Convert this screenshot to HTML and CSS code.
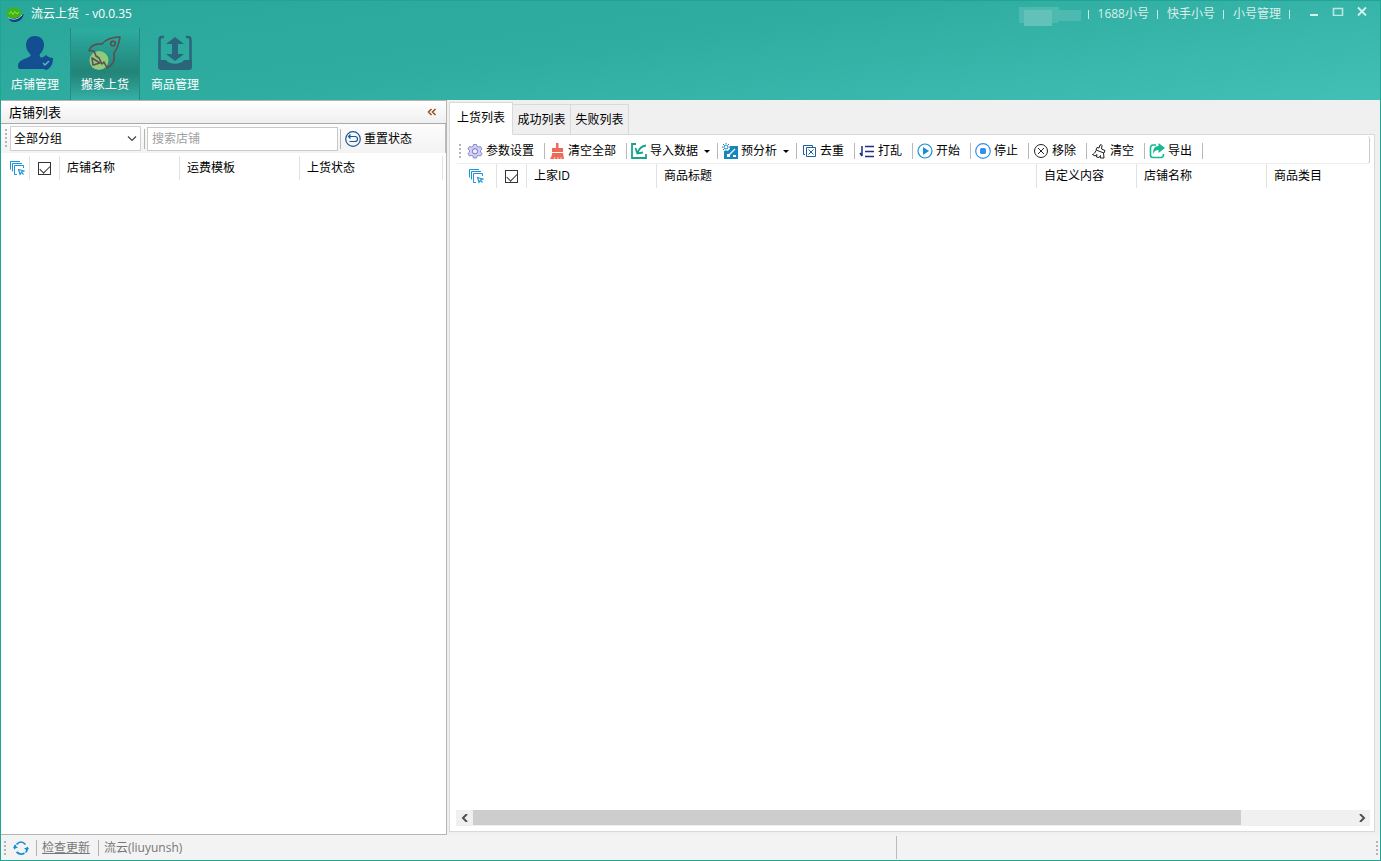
FILE: index.html
```html
<!DOCTYPE html>
<html lang="zh-CN">
<head>
<meta charset="utf-8">
<title>流云上货</title>
<link rel="stylesheet" href="styles.css">
</head>
<body>
<svg class="defs" aria-hidden="true">
  <symbol id="stack" viewBox="0 0 16 16"><g fill="none" stroke="#1c93d8"><path d="M1.500 9.500V1.500H11M3.500 11.500V3.500H13M8 14.500H5.500V5.500H14.500V8"/><path d="M9.500 9.500l1.500 5 1.500-2.500 2.500-1z M12.500 12.500l2 2" stroke-width="1.100"/></g></symbol>
</svg>
<div class="window">
  <header class="header">
    <div class="titlebar">
      <svg class="logo" viewBox="0 0 18 16"><ellipse cx="8" cy="7.500" rx="7.500" ry="6" fill="#3fb618"/><path d="M3 8l2-2.500 2 3 2-3 2 2.500 2-2" stroke="#9bdc50" fill="none"/><path d="M2 11c5 3 10 1 16-3-2 6-5 8-10 8-3 0-5-2-6-5z" fill="#123f80"/><path d="M2 11.500c5 3 10 2 14-2.500" stroke="#d5efe5" stroke-width=".8" fill="none"/></svg>
      <h1 class="title">流云上货&nbsp; - v0.0.35</h1>
      <nav class="links">
        <span class="mask"><svg viewBox="0 0 64 20"><path d="M1 1h40v3h22v11H40v2h-6v3H6v-3H1z" fill="#4db9af"/><path d="M6 4h28v16H6z" fill="#62c1b8"/></svg></span>
        <a href="#">1688小号</a><a href="#">快手小号</a><a href="#">小号管理</a>
      </nav>
      <div class="winbtns">
        <button aria-label="最小化"><svg viewBox="0 0 12 12"><path d="M2 11h8" stroke="#d8f1ee" stroke-width="2"/></svg></button>
        <button aria-label="最大化"><svg viewBox="0 0 12 12"><path d="M1.500 4.500h9v7h-9z" fill="none" stroke="#bde8e2" stroke-width="1.600"/></svg></button>
        <button aria-label="关闭"><svg viewBox="0 0 12 12"><path d="M2 3.500l8 8M10 3.500l-8 8" stroke="#d8f1ee" stroke-width="1.800"/></svg></button>
      </div>
    </div>
    <div class="modules">
      <button class="module"><svg viewBox="0 0 36 36"><path d="M18 1c6 0 9 4 9 9 0 4-2 7-4 9-1 2 0 3 2 4-2 5 0 9 3 11H3c-2 0-2-2-2-4 1-5 7-6 11-8 2-1 2-2 1-3-2-2-4-5-4-9 0-5 3-9 9-9z" fill="#134f90"/><path d="M29 20c2 2 4 3 7 3 0 6-2 10-7 12-5-2-7-6-7-12 3 0 5-1 7-3z" fill="#134f90"/><path d="M26 28l2 2 4-4" fill="none" stroke="#5bb4c0" stroke-width="1.500"/></svg>店铺管理</button>
      <button class="module active"><svg viewBox="0 0 36 36"><circle cx="12" cy="25.500" r="9.500" fill="#92ca7c"/><g fill="none" stroke="#5b4f50" stroke-width="1.600" stroke-linejoin="round"><path d="M2 15.500c2-5 7-7 13-6.500 5-6 11-7 18-7-1 7-3 12-6 16 1 8-1 12-7 15l-3-6-2 2-3-6-3-2-2-5z"/><path d="M5 23l1 7 7-2z"/><circle cx="26" cy="8.500" r="2.300"/></g></svg>搬家上货</button>
      <button class="module"><svg viewBox="0 0 36 36"><path d="M7 2H5Q2.500 2 2.500 5v26M29 2h2q2.500 0 2.500 3v26" fill="none" stroke="#2b657a" stroke-width="2.500"/><path d="M1 25h8c3 5 15 5 18 0h8v7q0 3-3 3H4q-3 0-3-3zM18 2l9 7h-6v10h6l-9 7-9-7h6V9H9z" fill="#2b657a"/></svg>商品管理</button>
    </div>
  </header>

  <main class="main">
    <section class="shops">
      <div class="caption"><h2>店铺列表</h2><button aria-label="折叠"><svg viewBox="0 0 10 8"><path d="M4.500 1l-3 3 3 3M8.500 1l-3 3 3 3" fill="none" stroke="#9a4a1c" stroke-width="1.500"/></svg></button></div>
      <div class="filters">
        <i class="grip"></i>
        <select class="group" aria-label="分组"><option>全部分组</option></select>
        <i class="bar"></i>
        <input class="search" type="text" placeholder="搜索店铺" aria-label="搜索店铺">
        <i class="bar"></i>
        <button class="reset"><svg viewBox="0 0 16 16"><g fill="none" stroke="#1d5795" stroke-width="1.200"><circle cx="8" cy="8" r="7.300"/><path d="M5.500 3.500l-2 2 2 2M3.500 5.500H10q2.500 0 2.500 2.500T10 10.500H4.500"/></g></svg>重置状态</button>
      </div>
      <table class="list shoplist">
        <colgroup><col class="c29"><col class="c30"><col class="c120"><col class="c120"><col class="c143"><col></colgroup>
        <thead><tr><th class="ico first"><svg><use href="#stack"/></svg></th><th class="ico"><input type="checkbox" checked aria-label="全选店铺"></th><th>店铺名称</th><th>运费模板</th><th>上货状态</th><th></th></tr></thead>
      </table>
    </section>

    <section class="goods">
      <div class="tabs" role="tablist"><button class="tab on" role="tab">上货列表</button><button class="tab" role="tab">成功列表</button><button class="tab" role="tab">失败列表</button></div>
      <div class="page">
        <div class="tools">
          <i class="grip"></i>
          <button class="tool w82"><svg viewBox="0 0 16 16"><path d="M6.500 1.500h3l.5 2 1.500.5 2-.5 1.500 2.500-1.500 1.500v1.500L15 10.500 13.500 13l-2-.5-1.500.5-.5 2h-3L6 13l-1.500-.5-2 .5L1 10.500 2.500 9V7.500L1 6l1.500-2.500 2 .5L6 3.500z" fill="#d0cff4" stroke="#7f7bc9" stroke-width=".9"/><circle cx="8" cy="8.300" r="2.600" fill="#f0effe" stroke="#7773c4"/></svg>参数设置</button>
          <button class="tool w82"><svg viewBox="0 0 16 16"><path d="M7 0h2.500v5H14v4H3V5h4zM3 10h11l1 6H1c1-2 2-3 2-6z" fill="#ee6a57"/><path d="M5 16l1-2M9 16v-2M12 16v-2" stroke="#fff" stroke-width=".7"/></svg>清空全部</button>
          <button class="tool w91"><svg viewBox="0 0 16 16"><g fill="none" stroke="#18a38f" stroke-width="1.800"><path d="M5 1H1v14h14v-4M15 2.500c-4 .5-7 3-8.500 7.500M4.500 5l1.800 5.500L12 9.500"/></g></svg>导入数据<i class="caret"></i></button>
          <button class="tool w79"><svg viewBox="0 0 16 16"><path d="M2 3h14v13H2z" fill="#1687be"/><circle cx="4" cy="4" r="4" fill="#fff"/><circle cx="4" cy="4" r="2" fill="none" stroke="#1687be"/><path d="M4 0v1M4 7v1M0 4h1M7 4h1M1 1l1 1M7 1L6 2M1 7l1-1" stroke="#1687be"/><path d="M13 6l-7 7" stroke="#fff" stroke-width="1.300"/><path d="M5 11h3v3H5zM11 12h3v2h-3z" fill="#fff"/></svg>预分析<i class="caret"></i></button>
          <button class="tool w58"><svg viewBox="0 0 16 16"><path d="M4 11.500H2.500v-9h9V4M5.500 4.500h9v9h-9zM7.500 6.500l5 5M12.500 6.500l-5 5" fill="none" stroke="#205f9e"/></svg>去重</button>
          <button class="tool w58"><svg viewBox="0 0 16 16"><path d="M3 3v10M1 10l2 3M6 3.500h9M6 8.500h9M6 13.500h9" fill="none" stroke="#1b2f86" stroke-width="1.500"/></svg>打乱</button>
          <button class="tool w58"><svg viewBox="0 0 16 16"><circle cx="8" cy="8" r="7" fill="none" stroke="#1590d5" stroke-width="1.200"/><path d="M6 4l6 4-6 4z" fill="#1590d5"/></svg>开始</button>
          <button class="tool w58"><svg viewBox="0 0 16 16"><circle cx="8" cy="8" r="7.300" fill="none" stroke="#3191ed" stroke-width="1.200"/><rect x="5" y="5" width="6" height="6" rx="1.500" fill="#3191ed"/></svg>停止</button>
          <button class="tool w58"><svg viewBox="0 0 16 16"><circle cx="8" cy="8" r="6.500" fill="none" stroke="#222"/><path d="M5 5l6 6M11 5l-6 6" stroke="#222"/></svg>移除</button>
          <button class="tool w58"><svg viewBox="0 0 16 16"><path d="M8 5l1-3q1.500-1 2 .5L10.500 6l3.500 1.500-1 2.500-8-3 1-2.500zM5 7.500C4 10 3 11 1.500 11.500L4 13l2-1.500-.5 2.500 2.500.500 1.500-2-.2 2.500H13l-.5-5" fill="none" stroke="#222"/></svg>清空</button>
          <button class="tool w58"><svg viewBox="0 0 16 16"><path d="M7 2H4Q1.500 2 1.500 5v7q0 2.500 2.500 2.500h8q2.500 0 2.500-3V11" fill="none" stroke="#15b994" stroke-width="1.600"/><path d="M9.500 0l6.500 5-6.500 5V7c-3 0-4 1-5.500 4 0-5 1.500-8 5.500-8z" fill="#15b994"/></svg>导出</button>
        </div>
        <table class="list goodslist">
          <colgroup><col class="c41"><col class="c30"><col class="c130"><col class="c380"><col class="c100"><col class="c130"><col></colgroup>
          <thead><tr><th class="ico"><svg><use href="#stack"/></svg></th><th class="ico"><input type="checkbox" checked aria-label="全选商品"></th><th>上家ID</th><th>商品标题</th><th>自定义内容</th><th>店铺名称</th><th>商品类目</th></tr></thead>
        </table>
        <div class="scroll">
          <button aria-label="向左"><svg viewBox="0 0 8 8"><path d="M6 0L2 4l4 4" fill="none" stroke="#505050" stroke-width="2"/></svg></button>
          <div class="track"><div class="thumb"></div></div>
          <button aria-label="向右"><svg viewBox="0 0 8 8"><path d="M2 0l4 4-4 4" fill="none" stroke="#505050" stroke-width="2"/></svg></button>
        </div>
      </div>
    </section>
  </main>

  <footer class="status">
    <div class="info">
      <i class="grip"></i>
      <svg class="sync" viewBox="0 0 16 16"><path d="M3.500 4.500q4.500-5 9 0M14 7q1 3-1.500 5.500M11.500 13q-4 2.500-8-1M2 9q-1-2 .5-4" fill="none" stroke="#168fd5" stroke-width="1.700"/><path d="M0 8l2-3 3 3zM11 8h5l-2 3z" fill="#168fd5"/></svg>
      <i class="bar"></i><a href="#">检查更新</a><i class="bar"></i><span>流云(liuyunsh)</span>
    </div>
    <i class="grip"></i>
  </footer>
</div>
</body>
</html>
```
FILE: styles.css
```css
* { box-sizing: border-box; }
body, h1, h2 { margin: 0; font-weight: 400; font-size: 12px; }
body, button, input, select { font-family: "Open Sans", "Noto Sans CJK SC", sans-serif; font-size: 12px; line-height: 16px; color: #000; }
button { border: 0; padding: 0; background: none; }
svg { display: block; flex: none; }
.defs { position: absolute; width: 0; height: 0; }

.window { height: 100vh; display: flex; flex-direction: column; border: 1px solid #20a594; border-top: 0; background: #f0f0f0; }

.header { height: 100px; flex: none; background: linear-gradient(172deg, #2aa79b, #2fada1 45%, #42c0b5); border-top: 1px solid #20a594; color: #fff; }
.titlebar { display: flex; height: 25px; padding-left: 5px; align-items: center; }
.logo { width: 18px; height: 16px; }
.title { margin-left: 7px; color: #fff; }
.links { display: flex; align-items: center; margin-left: auto; }
.links a { color: #ddeeea; text-decoration: none; padding: 0 9px; position: relative; }
.links a::after, .mask::after { content: ""; position: absolute; right: 0; top: 4px; width: 1px; height: 9px; background: #cfe9e5; }
.mask { width: 71px; padding-right: 7px; position: relative; height: 16px; }
.mask svg { width: 64px; height: 20px; }
.winbtns { display: flex; align-self: flex-start; margin: 3px 12px 0 18px; gap: 12px; }
.winbtns svg { width: 12px; height: 12px; }
.modules { display: flex; padding-top: 2px; margin-left: -1px; }
.module { width: 70px; height: 72px; padding-top: 6px; display: flex; flex-direction: column; align-items: center; gap: 5px; color: #fff; }
.module svg { width: 36px; height: 38px; }
.module.active { background: linear-gradient(#2cab9f 5%, #238479 60%, #26897e 68%, #35b1a6); border: solid #258b80; border-width: 0 1px; }

.main { flex: 1; display: flex; min-height: 0; gap: 2px; }
.shops { width: 446px; flex: none; background: #fff; border: solid #b4b4b4; border-width: 1px 1px 1px 0; }
.caption { display: flex; justify-content: space-between; align-items: center; height: 23px; padding: 0 9px 0 8px; border-bottom: 1px solid #aaa; background: linear-gradient(#fff, #efefef); }
.caption h2 { font-size: 13px; }
.caption svg { width: 10px; height: 8px; }
.grip { width: 2px; height: 20px; flex: none; background: repeating-linear-gradient(#b5b5b5 0 2px, transparent 2px 4px); }
.bar { width: 1px; height: 20px; flex: none; background: #b4b4b4; }
.filters { display: flex; align-items: center; height: 29px; padding-left: 4px; background: linear-gradient(#fcfcfc, #f3f3f3); border-right: 1px solid #bbb; }
.group { width: 131px; height: 25px; margin: 0 3px; padding: 0 0 0 3px; border: 1px solid #d0d0d0; appearance: none; border-radius: 0;
  background: url("data:image/svg+xml,%3Csvg xmlns='http://www.w3.org/2000/svg' width='10' height='6'%3E%3Cpath d='M1 .5l4 4 4-4' fill='none' stroke='%23444' stroke-width='1.2'/%3E%3C/svg%3E") no-repeat right 3px center #fff; }
.search { width: 191px; height: 24px; margin: 0 2px; padding: 0 4px; border: 1px solid #c8c8c8; }
.search::placeholder { color: #a0a0a0; }
.reset { display: flex; align-items: center; gap: 3px; margin-left: 4px; }
.reset svg { width: 16px; height: 16px; }

.list { table-layout: fixed; border-collapse: separate; border-spacing: 0; width: 100%; flex: none; }
.list th { height: 24px; padding: 0 0 0 7px; border-right: 1px solid #e2e2e2; font-weight: 400; text-align: left; white-space: nowrap; }
.list th:last-child { border-right: 0; }
.list th.ico { padding: 0; }
.list th.first { padding-left: 4px; }
.ico svg { width: 16px; height: 16px; margin: 0 auto; }
.ico input { appearance: none; display: block; width: 13px; height: 13px; margin: 0 auto; border: 1px solid #333; background: #fff; }
.ico input:checked::after { content: ""; display: block; width: 9px; height: 5px; margin: 2px 0 0 1px; border: solid #333; border-width: 0 0 1px 1px; transform: rotate(-45deg); }
.shoplist { margin-top: 3px; }
.c29 { width: 29px; } .c30 { width: 30px; } .c41 { width: 41px; } .c100 { width: 100px; }
.c120 { width: 120px; } .c130 { width: 130px; } .c143 { width: 143px; } .c380 { width: 380px; }

.goods { flex: 1; min-width: 0; display: flex; flex-direction: column; padding: 2px 5px 3px 0; }
.tabs { display: flex; align-items: flex-end; height: 33px; flex: none; margin-bottom: -1px; }
.tab { width: 58px; height: 31px; border: 1px solid #d9d9d9; border-left: 0; background: #efefef; }
.tab.on { width: 64px; height: 33px; padding-bottom: 2px; border-left: 1px solid #d9d9d9; border-bottom-color: #fff; background: #fff; z-index: 1; }
.page { flex: 1; min-height: 0; display: flex; flex-direction: column; border: 1px solid #d9d9d9; background: #fff; padding: 1px 4px 5px 6px; }
.tools { display: flex; align-items: center; height: 28px; flex: none; padding: 3px 0 0 3px; border-bottom: 1px solid #eee; border-right: 1px solid #ccc; border-radius: 3px; }
.tools .grip { height: 14px; margin-right: 2px; }
.tool { display: flex; align-items: center; gap: 3px; height: 16px; padding-left: 4px; border-right: 1px solid #b9b9b9; white-space: nowrap; }
.tool svg { width: 16px; height: 16px; }
.w58 { width: 58px; } .w79 { width: 79px; } .w82 { width: 82px; } .w91 { width: 91px; }
.caret { margin-left: 3px; border: 3px solid transparent; border-top-color: #000; border-bottom: 0; }
.scroll { display: flex; height: 16px; margin-top: auto; background: #f0f0f0; }
.scroll button { width: 17px; display: flex; align-items: center; justify-content: center; }
.scroll svg { width: 8px; height: 8px; }
.track { flex: 1; }
.thumb { width: 87.3%; height: 15px; background: #cdcdcd; }

.status { display: flex; align-items: center; height: 25px; flex: none; padding: 0 2px 0 3px; background: #f3f3f3; color: #777; }
.info { display: flex; align-items: center; width: 65%; height: 23px; border-right: 1px solid #bbb; }
.info .grip, .status > .grip { height: 14px; }
.info .bar { height: 16px; }
.sync { width: 16px; height: 16px; margin: 0 7px; }
.info a { color: #777; margin: 0 8px 0 5px; }
.info span { margin-left: 5px; }
.status > .grip { margin-left: auto; }
```
